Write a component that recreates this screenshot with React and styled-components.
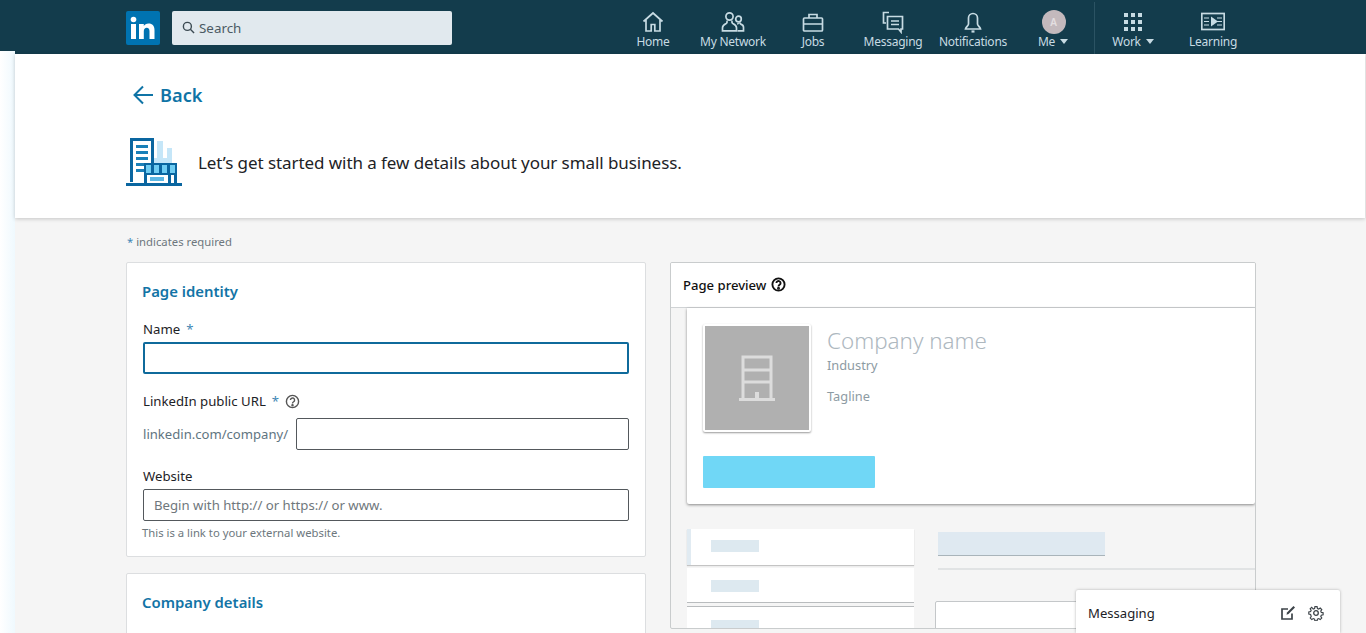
import React from 'react';
import styled, { createGlobalStyle } from 'styled-components';

const Global = createGlobalStyle`
  html, body { margin: 0; padding: 0; height: 100%; overflow: hidden; background: #f5f5f5; }
  body { font-family: "Noto Sans", "Open Sans", sans-serif; color: #1d2226; }
  * { box-sizing: border-box; }
`;

const Page = styled.div`
  position: relative;
  width: 1366px;
  height: 633px;
  overflow: hidden;
  background: #f5f5f5;
`;
const EdgeStrip = styled.div`
  position: absolute;
  left: 0;
  top: 51px;
  width: 15px;
  bottom: 0;
  background: linear-gradient(90deg, #ffffff 0%, #eff9fe 100%);
`;
const Nav = styled.header`
  height: 54px;
  background: #133c4c;
  display: flex;
  align-items: flex-start;
  padding-left: 126px;
`;
const Logo = styled.div`
  width: 34px;
  height: 34px;
  margin-top: 11px;
  border-radius: 2px;
  background: #0073b1;
  display: flex;
`;
const Search = styled.div`
  width: 280px;
  height: 34px;
  margin: 11px 161px 0 12px;
  border-radius: 2px;
  background: #e1e9ee;
  display: flex;
  align-items: center;
  gap: 4px;
  padding: 0 0 1px 10px;
  font-size: 13.4px;
  color: #4b5a63;
`;
const NavItem = styled.div`
  width: 80px;
  height: 54px;
  display: flex;
  flex-direction: column;
  align-items: center;
  padding-top: 10px;
  font-size: 12px;
  line-height: 16px;
  letter-spacing: -0.25px;
  color: #c7dbe3;
  white-space: nowrap;
  position: relative;
  ${p => p.$divided && `
    &::before {
      content: '';
      position: absolute;
      left: 1px;
      top: 2px;
      bottom: 0;
      width: 1px;
      background: #2b5363;
    }
  `}
`;
const NavIconBox = styled.div`
  height: 24px;
  display: flex;
  align-items: center;
  justify-content: center;
`;
const Caret = styled.span`
  display: inline-block;
  width: 0;
  height: 0;
  margin-left: 5px;
  vertical-align: 2px;
  border: 4px solid transparent;
  border-top: 5px solid #c7dbe3;
  border-bottom: 0;
`;
const Avatar = styled.div`
  width: 24px;
  height: 24px;
  margin-left: 1px;
  border-radius: 50%;
  background: #c3b9bd;
  color: #e4dfe1;
  font-size: 10px;
  line-height: 24px;
  text-align: center;
  font-weight: 600;
`;
const Hero = styled.section`
  margin-left: 15px;
  width: 1350px;
  height: 164px;
  background: #fff;
  box-shadow: 0 1px 4px rgba(0,0,0,.2);
  padding: 24px 0 0 111px;
  position: relative;
`;
const BackLink = styled.div`
  display: flex;
  align-items: center;
  gap: 6px;
  padding-left: 7px;
  height: 34px;
  font-size: 18.2px;
  font-weight: 600;
  color: #0f74a6;
`;
const HeroRow = styled.div`
  display: flex;
  align-items: center;
  gap: 16px;
  margin-top: 26px;
  height: 48px;
`;
const HeroText = styled.div`
  font-size: 17px;
  color: #1d2226;
  letter-spacing: -0.07px;
`;
const Content = styled.main`
  padding: 16px 0 0 126px;
`;
const Required = styled.div`
  font-size: 11.3px;
  line-height: 16px;
  color: #6d777d;
  height: 28px;
  padding-left: 1px;
  & > span { color: #3f87b5; }
`;
const Columns = styled.div`
  display: flex;
  gap: 24px;
  align-items: flex-start;
`;
const LeftCol = styled.div`
  width: 520px;
  display: flex;
  flex-direction: column;
  gap: 16px;
`;
const Card = styled.section`
  background: #fff;
  border: 1px solid #dcdee0;
  border-radius: 2px;
  padding: 16px 16px 0;
  height: ${p => p.$h}px;
`;
const CardTitle = styled.h2`
  margin: 0 0 0 -1px;
  font-size: 14.9px;
  line-height: 25px;
  font-weight: 600;
  color: #1274a6;
`;
const Label = styled.label`
  display: flex;
  align-items: center;
  gap: 6px;
  height: 20px;
  font-size: 13.2px;
  color: #1d2226;
  margin-top: ${p => p.$mt || 0}px;
`;
const Star = styled.span`
  color: #3f87b5;
`;
const Input = styled.div`
  height: 32px;
  border: 1px solid #53585c;
  border-radius: 2px;
  background: #fff;
  flex: 1;
  margin-top: ${p => p.$mt || 0}px;
  padding-left: 10px;
  font-size: 13.2px;
  line-height: 30px;
  color: #6f777c;
  ${p => p.$focus && 'border: 2px solid #0f6a9b;'}
`;
const UrlRow = styled.div`
  display: flex;
  align-items: center;
  gap: 8px;
  margin-top: 7px;
  font-size: 13.1px;
  color: #5f7581;
`;
const Hint = styled.div`
  font-size: 11.3px;
  line-height: 16px;
  margin: 4px 0 0 -1px;
  color: #6d777d;
`;
const Preview = styled.section`
  width: 586px;
  height: 367px;
  background: #f5f5f5;
  border: 1px solid #c9cccd;
  border-radius: 2px;
  overflow: hidden;
`;
const PreviewHead = styled.div`
  height: 45px;
  background: #fff;
  border-bottom: 1px solid #d0d3d5;
  display: flex;
  align-items: center;
  gap: 5px;
  padding: 0 0 1px 12px;
  font-size: 13.1px;
  font-weight: 500;
  color: #111;
`;
const PreviewBody = styled.div`
  padding-left: 16px;
`;
const TopCard = styled.div`
  height: 196px;
  background: #fff;
  box-shadow: 0 1px 3px rgba(0,0,0,.45);
  border-radius: 0 0 2px 2px;
  padding: 16px;
`;
const TopRow = styled.div`
  display: flex;
  gap: 16px;
`;
const LogoBox = styled.div`
  width: 108px;
  height: 108px;
  padding: 2px;
  background: #fff;
  box-shadow: 0 1px 2px rgba(0,0,0,.4);
  border-radius: 2px;
  & > div {
    width: 100%; height: 100%;
    background: #b0b0b0;
    display: flex; align-items: center; justify-content: center;
  }
`;
const CompanyName = styled.div`
  font-size: 22.4px;
  line-height: 32px;
  font-weight: 300;
  color: #aeb8bf;
  margin-top: 1px;
`;
const Muted = styled.div`
  font-size: 12.8px;
  line-height: 18px;
  color: #8d9ba3;
  margin-top: ${p => p.$mt || 0}px;
`;
const FakeButton = styled.div`
  width: 172px;
  height: 32px;
  margin-top: 24px;
  background: #70d7f6;
  border-radius: 1px;
`;
const Lower = styled.div`
  display: flex;
  margin-top: 25px;
`;
const Tabs = styled.div`
  width: 227px;
  display: flex;
  flex-direction: column;
  gap: 3px;
`;
const Tab = styled.div`
  height: ${p => p.$h}px;
  background: #fff;
  padding: ${p => p.$pt}px 0 0 24px;
  ${p => p.$active && 'border-left: 4px solid #e1ebf2; padding-left: 20px; box-shadow: 0 1px 1px rgba(0,0,0,.2);'}
  ${p => p.$line && 'border-bottom: 1px solid #b9bcbe;'}
  ${p => p.$topLine && 'border-top: 1px solid #b9bcbe;'}
`;
const Chip = styled.div`
  width: 48px;
  height: 12px;
  background: #dde9f0;
`;
const Side = styled.div`
  flex: 1;
  padding: 3px 0 0 24px;
`;
const SideBar = styled.div`
  width: 167px;
  height: 24px;
  background: #dfe9f1;
  border-bottom: 1px solid #a9b4ba;
`;
const SideRule = styled.div`
  height: 2px;
  margin-top: 12px;
  background: #e1e3e4;
`;
const SideBox = styled.div`
  height: 40px;
  margin: 31px 0 0 -3px;
  background: #fff;
  border: 1px solid #c4c7c9;
  border-radius: 2px;
`;
const Messenger = styled.aside`
  position: absolute;
  left: 1076px;
  top: 590px;
  width: 264px;
  height: 43px;
  background: #fff;
  box-shadow: 0 0 3px rgba(0,0,0,.3);
  border-radius: 2px 2px 0 0;
  display: flex;
  align-items: center;
  padding: 3px 16px 0 12px;
  font-size: 13.1px;
  color: #1d2226;
  & > span { flex: 1; }
  & > svg { margin-left: 12px; }
`;

const Ic = ({ children }) => (
  <svg width="24" height="24" viewBox="0 0 24 24" fill="none" stroke="#c7dbe3" strokeWidth="1.7">{children}</svg>
);
const HomeIcon = () => (
  <Ic><path d="M2.500 11.500 12 3l9.500 8.500M5 9.500V21h5.200v-6.500h3.600V21H19V9.500" /></Ic>
);
const NetworkIcon = () => (
  <Ic>
    <circle cx="8.500" cy="6.500" r="3.600" />
    <path d="M6 10.500c.3 1.500.2 2.400-.8 3-1.500.7-3.700 1.800-3.700 4.300v3h14v-3c0-2.500-2.200-3.600-3.700-4.300-1-.6-1.100-1.500-.8-3" />
    <circle cx="17.500" cy="9" r="2.800" />
    <path d="M16.200 14c1-.1 1.100-.9 1-1.300M19 12.300c-.2.800 0 1.500.8 1.800 1.400.5 2.700 1.400 2.700 3.100v3.600H16.500" />
  </Ic>
);
const JobsIcon = () => (
  <Ic>
    <rect x="2.500" y="8" width="19" height="13" rx="1" />
    <path d="M8 8V4.500h8V8M2.500 14h19" />
  </Ic>
);
const MessagingIcon = () => (
  <Ic>
    <path d="M8 2.500H2.500V13H5" />
    <path d="M6.500 6.500h15V19h-1.500v3l-2.500-3H6.500z" />
    <path d="M10 11h8M10 14.500h8" />
  </Ic>
);
const BellIcon = () => (
  <Ic>
    <path d="M7.500 8a4.500 4.500 0 0 1 9 0v6c0 1.600 2.500 3 3 5h-15c.5-2 3-3.400 3-5z" />
    <path d="M10.500 21.500h3" strokeWidth="2.200" />
  </Ic>
);
const GridIcon = () => (
  <svg width="24" height="24" viewBox="0 0 24 24" fill="#c7dbe3">
    {[3, 10, 17].flatMap(y => [3, 10, 17].map(x => <rect key={`${x}-${y}`} x={x} y={y} width="4" height="4" />))}
  </svg>
);
const LearningIcon = () => (
  <svg width="24" height="24" viewBox="0 0 24 24" fill="none" stroke="#c7dbe3" strokeWidth="1.700">
    <rect x=".8" y="3.500" width="22.400" height="16" />
    <path d="M3 8h5M3 11.500h5M3 15h5M16 8h5M16 11.500h5M16 15h5" strokeWidth="1.200" />
    <path d="M10 6.500l7 5-7 5z" fill="#c7dbe3" stroke="none" />
  </svg>
);
const HelpIcon = ({ c = '#444', s = 1.500 }) => (
  <svg width="15" height="15" viewBox="0 0 16 16" fill="none" stroke={c} strokeWidth={s}>
    <circle cx="8" cy="8" r="6.500" />
    <path d="M5.800 6.500a2.200 2.200 0 1 1 3.400 1.800c-.8.500-1.200.9-1.200 1.700" />
    <circle cx="8" cy="12" r=".6" fill={c} />
  </svg>
);
const BuildingIcon = () => (
  <svg width="56" height="48" viewBox="0 0 56 48">
    <path d="M31 3h6v22h-6zM41 10h5v15h-5z" fill="#c5e6f8" />
    <path d="M27 20h19v6H27z" fill="#c5e6f8" />
    <path d="M4 0h24v25h-3V3H7v41H4z" fill="#0a66a0" />
    <path d="M10 7h12v3H10zM10 13h12v3H10zM10 19h12v3H10zM10 25h8v3h-8zM10 31h8v3h-8z" fill="#1a80b8" />
    <path d="M18 25h33v20H18z" fill="#0a66a0" />
    <path d="M20 27h29v8H20z" fill="#6fcdf3" />
    <path d="M25 27h3v8h-3zM33 27h3v8h-3zM41 27h3v8h-3z" fill="#0a66a0" />
    <path d="M21 37h21v8H21zM45 37h3v8h-3z" fill="#fff" />
    <path d="M24 39h14v4H24z" fill="#5db8e4" />
    <path d="M0 45h56v3H0z" fill="#0a66a0" />
  </svg>
);

const items = [
  ['Home', <HomeIcon />],
  ['My Network', <NetworkIcon />],
  ['Jobs', <JobsIcon />],
  ['Messaging', <MessagingIcon />],
  ['Notifications', <BellIcon />],
];

export default function App() {
  return (
    <Page>
      <Global />
      <Nav>
        <Logo>
          <svg width="34" height="34" viewBox="0 0 34 34" fill="#fff">
            <circle cx="7.500" cy="8.500" r="2.800" />
            <rect x="5" y="13" width="5" height="15" />
            <path d="M13 13h4.800v2.100c.9-1.500 2.500-2.500 4.700-2.500 4 0 6 2.400 6 6.800V28h-5v-7.700c0-2.300-.9-3.500-2.700-3.500-1.800 0-3 1.200-3 3.500V28H13z" />
          </svg>
        </Logo>
        <Search>
          <svg width="13" height="13" viewBox="0 0 14 14" fill="none" stroke="#3b4a52" strokeWidth="1.500">
            <circle cx="5.800" cy="5.800" r="4.300" />
            <path d="M9 9l4 4" />
          </svg>
          Search
        </Search>
        {items.map(([label, icon]) => (
          <NavItem key={label}>
            <NavIconBox>{icon}</NavIconBox>
            {label}
          </NavItem>
        ))}
        <NavItem>
          <NavIconBox><Avatar>A</Avatar></NavIconBox>
          <span>Me<Caret /></span>
        </NavItem>
        <NavItem $divided>
          <NavIconBox><GridIcon /></NavIconBox>
          <span>Work<Caret /></span>
        </NavItem>
        <NavItem>
          <NavIconBox><LearningIcon /></NavIconBox>
          Learning
        </NavItem>
      </Nav>
      <EdgeStrip />
      <Hero>
        <BackLink>
          <svg width="21" height="20" viewBox="0 0 21 20" fill="none" stroke="#0f74a6" strokeWidth="2">
            <path d="M20 10H2M10 1.500 1.500 10l8.500 8.500" />
          </svg>
          Back
        </BackLink>
        <HeroRow>
          <BuildingIcon />
          <HeroText>Let’s get started with a few details about your small business.</HeroText>
        </HeroRow>
      </Hero>
      <Content>
        <Required><span>*</span> indicates required</Required>
        <Columns>
          <LeftCol>
            <Card $h={295}>
              <CardTitle>Page identity</CardTitle>
              <Label $mt={15}>Name <Star>*</Star></Label>
              <Input $mt={3} $focus />
              <Label $mt={17}>LinkedIn public URL <Star>*</Star> <HelpIcon c="#555" /></Label>
              <UrlRow>linkedin.com/company/ <Input /></UrlRow>
              <Label $mt={16}>Website</Label>
              <Input $mt={3}>Begin with http:// or https:// or www.</Input>
              <Hint>This is a link to your external website.</Hint>
            </Card>
            <Card $h={100}>
              <CardTitle>Company details</CardTitle>
            </Card>
          </LeftCol>
          <Preview>
            <PreviewHead>Page preview <HelpIcon c="#111" s={2} /></PreviewHead>
            <PreviewBody>
              <TopCard>
                <TopRow>
                  <LogoBox>
                    <div>
                      <svg width="36" height="46" viewBox="0 0 36 46" fill="none" stroke="#dcdcdc" strokeWidth="3">
                        <path d="M4 44V2h28v42M4 15h28M4 27h28" />
                        <path d="M0 44.500h36" strokeWidth="3" />
                        <path d="M18 44v-7" strokeWidth="4" />
                      </svg>
                    </div>
                  </LogoBox>
                  <div>
                    <CompanyName>Company name</CompanyName>
                    <Muted $mt={-1}>Industry</Muted>
                    <Muted $mt={13}>Tagline</Muted>
                  </div>
                </TopRow>
                <FakeButton />
              </TopCard>
              <Lower>
                <Tabs>
                  <Tab $active $h={36} $pt={11}><Chip /></Tab>
                  <Tab $h={35} $pt={12} $line><Chip /></Tab>
                  <Tab $h={36} $pt={13} $topLine><Chip /></Tab>
                </Tabs>
                <Side>
                  <SideBar />
                  <SideRule />
                  <SideBox />
                </Side>
              </Lower>
            </PreviewBody>
          </Preview>
        </Columns>
      </Content>
      <Messenger>
        <span>Messaging</span>
        <svg width="16" height="16" viewBox="0 0 16 16" fill="none" stroke="#3c4348" strokeWidth="1.700">
          <path d="M12 8.500V14H2V4h6" />
          <path d="M6.500 9.800 7 7.500 13.500 1l1.500 1.500L8.500 9z" fill="#3c4348" stroke="none" />
        </svg>
        <svg width="16" height="16" viewBox="0 0 16 16" fill="none" stroke="#3c4348" strokeWidth="1.300">
          <circle cx="8" cy="8" r="2.300" />
          <path d="M6.800 1h2.400l.4 2 1.400.6 1.700-1.100 1.700 1.700-1.100 1.700.6 1.400 2 .4v2.400l-2 .4-.6 1.400 1.100 1.700-1.700 1.700-1.700-1.100-1.400.6-.4 2H6.800l-.4-2-1.400-.6-1.700 1.100-1.700-1.700 1.100-1.700L2 9.600 0 9.200V6.800l2-.4.600-1.400-1.100-1.700 1.700-1.700L4.900 3.600 6.400 3z" transform="translate(.8 .8) scale(.9)" />
        </svg>
      </Messenger>
    </Page>
  );
}
